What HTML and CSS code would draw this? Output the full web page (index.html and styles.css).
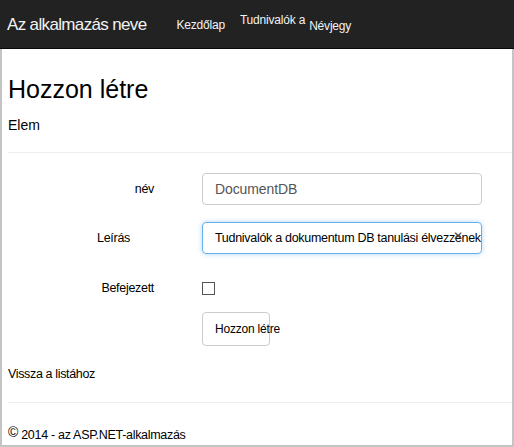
FILE: index.html
```html
<!DOCTYPE html>
<html lang="hu">
<head>
<meta charset="utf-8">
<title>Hozzon létre</title>
<link rel="stylesheet" href="styles.css">
</head>
<body>
<div class="frame">
  <header class="navbar">
    <span class="brand">Az alkalmazás neve</span>
    <nav class="nav">
      <span class="nav-link">Kezdőlap</span>
      <span class="nav-link nav-link-up">Tudnivalók a</span>
      <span class="nav-link nav-link-tight">Névjegy</span>
    </nav>
  </header>
  <main class="content">
    <h1 class="title">Hozzon létre</h1>
    <h4 class="subtitle">Elem</h4>
    <hr class="rule">
    <form class="form">
      <div class="row">
        <label class="label">név</label>
        <div class="input">DocumentDB</div>
      </div>
      <div class="row">
        <label class="label label-left">Leírás</label>
        <div class="input input-focus">Tudnivalók a dokumentum DB tanulási élvezzenek<span class="clear">✕</span></div>
      </div>
      <div class="row row-check">
        <label class="label">Befejezett</label>
        <span class="checkbox"></span>
      </div>
      <div class="row row-btn">
        <span class="label"></span>
        <span class="button"><span class="button-text">Hozzon létre</span></span>
      </div>
    </form>
    <div class="back">Vissza a listához</div>
    <hr class="rule rule-foot">
    <footer class="footer"><span class="copy">©</span> 2014 - az ASP.NET-alkalmazás</footer>
  </main>
</div>
</body>
</html>
```
FILE: styles.css
```css
* { box-sizing: border-box; }
html, body { margin: 0; padding: 0; }
body {
  width: 514px;
  height: 447px;
  overflow: hidden;
  font-family: "Liberation Sans", Arial, sans-serif;
  color: #000;
  background: #fff;
}
.frame {
  width: 514px;
  height: 447px;
  border-left: 2px solid #c4c4c4;
  border-right: 2px solid #c4c4c4;
  border-bottom: 2px solid #c4c4c4;
  display: flex;
  flex-direction: column;
}
.navbar {
  height: 49px;
  margin: 0 -2px;
  background: #222;
  border-bottom: 1px solid #080808;
  display: flex;
  align-items: center;
  padding-left: 7px;
  flex-shrink: 0;
}
.brand {
  color: #f2f2f2;
  font-size: 17px;
  letter-spacing: -0.65px;
  padding-top: 2px;
}
.nav {
  display: flex;
  margin-left: 30px;
  font-size: 12px;
  letter-spacing: -0.2px;
  color: #f2f2f2;
}
.nav-link { margin-right: 15px; padding-top: 3px; }
.nav-link-up { padding-top: 0; margin-right: 4px; position: relative; top: -2px; }
.nav-link-tight { margin-right: 0; padding-top: 4px; }
.content {
  padding: 0 0 0 6px;
  flex: 1;
}
.title {
  margin: 26px 0 0 0;
  font-size: 25px;
  font-weight: normal;
  line-height: 28px;
}
.subtitle {
  margin: 13px 0 0 0;
  font-size: 14px;
  font-weight: normal;
  line-height: 18px;
}
.rule {
  margin: 18px 0 0 0;
  border: 0;
  border-top: 1px solid #eee;
}
.form {
  margin-top: 20px;
  display: flex;
  flex-direction: column;
  gap: 17px;
}
.row {
  display: grid;
  grid-template-columns: 194px 280px;
  align-items: center;
}
.label {
  font-size: 12.5px;
  letter-spacing: -0.3px;
  text-align: right;
  padding-right: 48px;
}
.label-left { padding-right: 72px; }
.input {
  height: 32px;
  border: 1px solid #ccc;
  border-radius: 4px;
  padding: 0 12px;
  font-size: 14px;
  letter-spacing: -0.1px;
  color: #555;
  display: flex;
  align-items: center;
  white-space: nowrap;
  position: relative;
  overflow: visible;
}
.input-focus {
  border-color: #66afe9;
  box-shadow: 0 0 5px rgba(102, 175, 233, 0.5);
  color: #000;
  font-size: 12.5px;
  letter-spacing: -0.3px;
}
.clear {
  position: absolute;
  left: 250px;
  top: 6px;
  font-size: 12px;
  color: #444;
}
.row-check { margin-top: 10px; }
.checkbox {
  width: 13px;
  height: 13px;
  border: 1px solid #555;
  background: #fff;
  display: block;
}
.row-btn { grid-template-columns: 194px auto; justify-items: start; }
.button {
  width: 68px;
  height: 34px;
  border: 1px solid #ccc;
  border-radius: 4px;
  display: flex;
  align-items: center;
  padding-left: 12px;
  font-size: 12px;
  letter-spacing: -0.2px;
  white-space: nowrap;
  overflow: visible;
}
.back {
  margin-top: 21px;
  font-size: 12.5px;
  letter-spacing: -0.35px;
}
.rule-foot { margin-top: 21px; }
.footer {
  margin-top: 23px;
  font-size: 12.5px;
  letter-spacing: -0.3px;
}
.copy {
  font-size: 14px;
  position: relative;
  top: -2px;
}
```
